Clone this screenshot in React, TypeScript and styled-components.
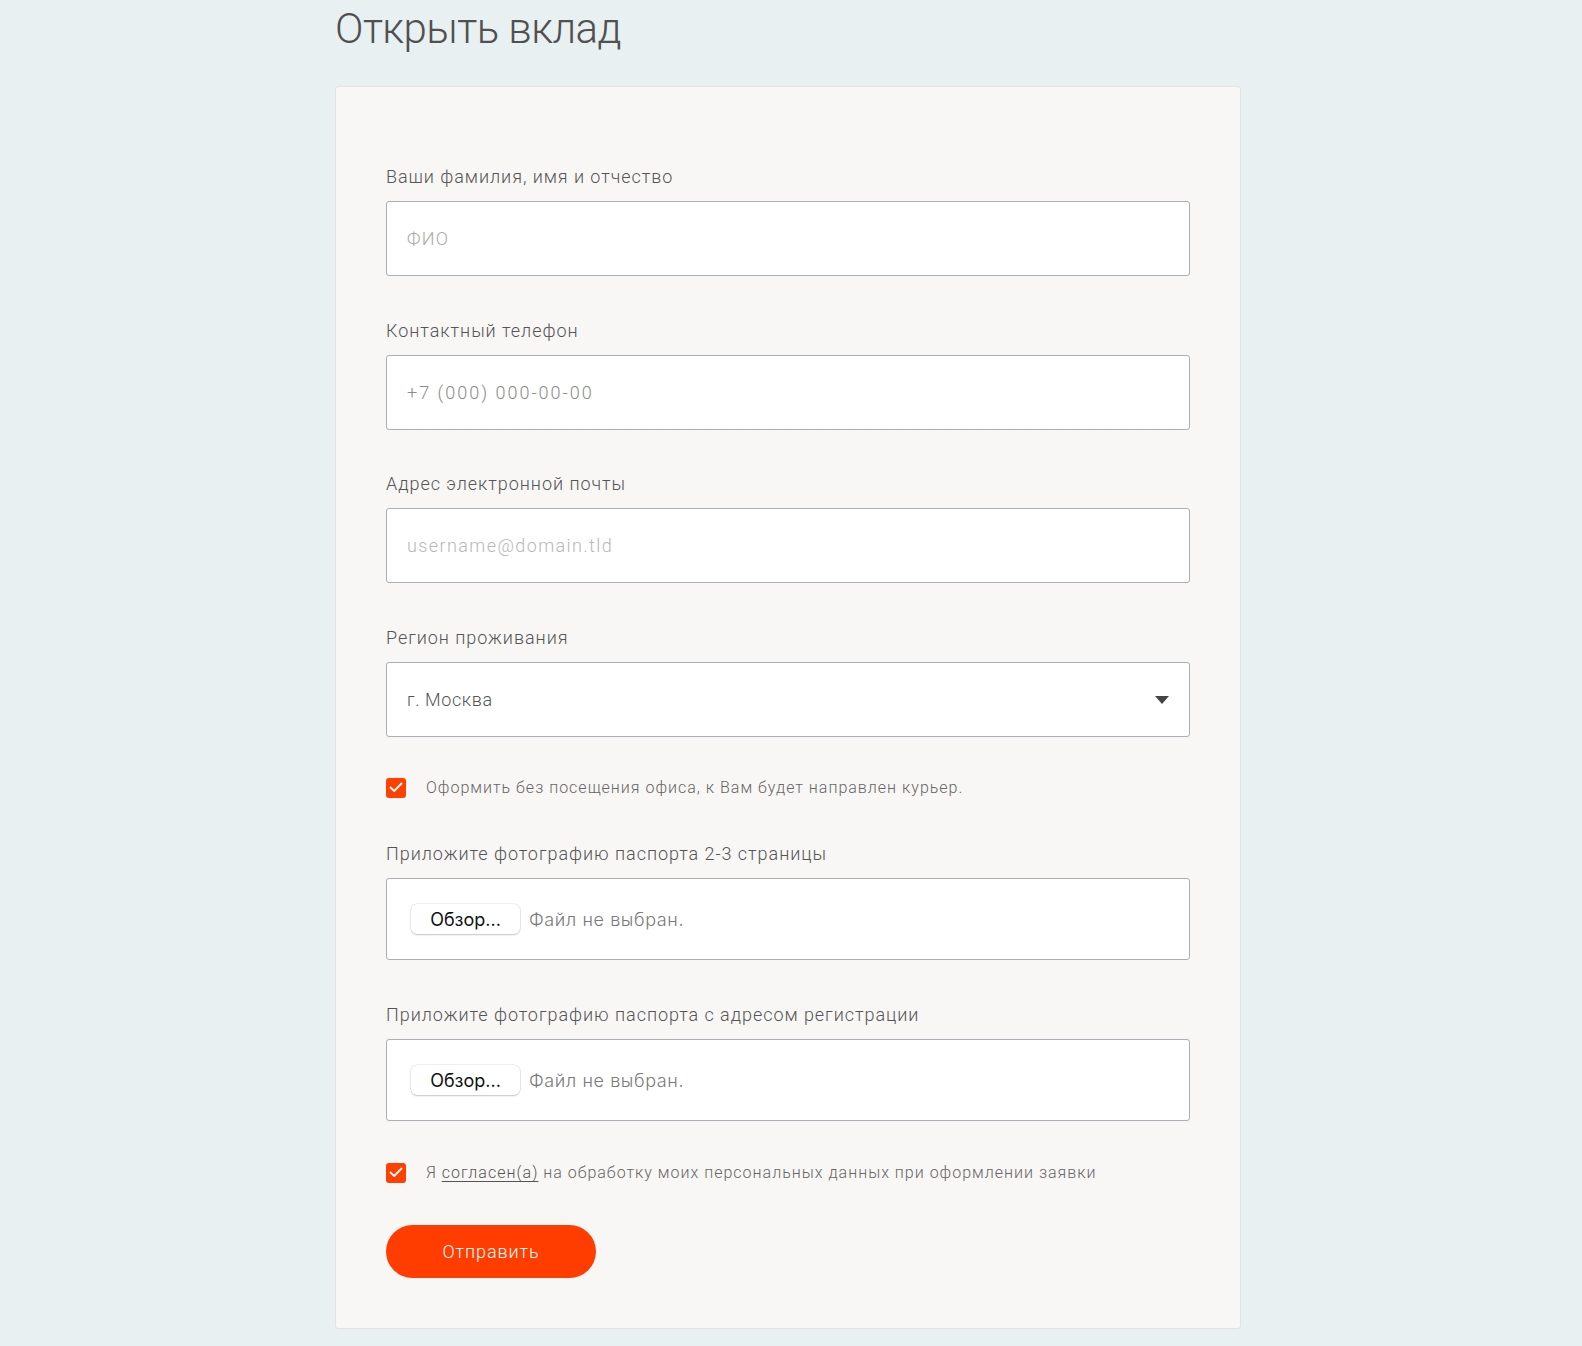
import React from "react";
import styled, { createGlobalStyle } from "styled-components";

const GlobalStyle = createGlobalStyle`
  html, body {
    margin: 0;
    padding: 0;
    background: #e8f0f1;
  }
  body {
    font-family: Roboto, "Noto Sans", sans-serif;
    -webkit-font-smoothing: antialiased;
  }
  * { box-sizing: border-box; }
`;

const Page = styled.div`
  width: 906px;
  margin-left: calc(50% - 456px);
  padding-top: 4px;
  padding-bottom: 17px;
`;

const Title = styled.h1`
  margin: 0 0 32px;
  font-family: Roboto, sans-serif;
  font-weight: 300;
  font-size: 42px;
  line-height: 50px;
  color: #505050;
  letter-spacing: -0.55px;
`;

const Card = styled.form`
  width: 906px;
  background: #f8f7f5;
  border: 1px solid #e1e3e3;
  border-radius: 3px;
  padding: 78px 50px 50px;
  display: flex;
  flex-direction: column;
`;

const Field = styled.div<{ $gap?: number }>`
  display: flex;
  flex-direction: column;
  gap: 12px;
  margin-bottom: ${(p) => p.$gap ?? 42.7}px;
`;

const Label = styled.label`
  font-family: Roboto, sans-serif;
  font-weight: 300;
  font-size: 18px;
  line-height: 24px;
  color: #555;
  letter-spacing: 0.95px;
`;

const Input = styled.input<{ $ph?: string; $ls?: number }>`
  width: 100%;
  height: 75px;
  border: 1px solid #a9afb3;
  border-radius: 3px;
  background: #fff;
  padding: 0 20px;
  font-family: Roboto, sans-serif;
  font-weight: 300;
  font-size: 18px;
  letter-spacing: ${(p) => p.$ls ?? 1.3}px;
  color: #555;
  outline: none;
  &::placeholder {
    color: ${(p) => p.$ph ?? "#aaa"};
  }
`;

const SelectBox = styled.div`
  position: relative;
  display: flex;
  align-items: center;
  justify-content: space-between;
  height: 75px;
  border: 1px solid #a9afb3;
  border-radius: 3px;
  background: #fff;
  padding: 0 20px;
  font-family: Roboto, sans-serif;
  font-weight: 300;
  font-size: 18px;
  letter-spacing: 0.6px;
  color: #555;
`;

const Caret = styled.span`
  width: 0;
  height: 0;
  border-left: 7px solid transparent;
  border-right: 7px solid transparent;
  border-top: 8px solid #444;
  margin-top: 1px;
`;

const CheckRow = styled.label<{ $gap: number }>`
  display: flex;
  align-items: center;
  gap: 20px;
  height: 24px;
  margin-bottom: ${(p) => p.$gap}px;
  font-family: Roboto, sans-serif;
  font-weight: 300;
  font-size: 16px;
  letter-spacing: 1px;
  color: #666;
`;

const Box = styled.span`
  flex: none;
  width: 20px;
  height: 20px;
  border-radius: 3px;
  background: #ff4000;
  display: flex;
  align-items: center;
  justify-content: center;
`;

const Link = styled.a`
  color: #555;
  text-decoration: underline;
  text-underline-offset: 3px;
  text-decoration-thickness: 1px;
`;

const FileBox = styled.div`
  display: flex;
  align-items: center;
  gap: 9px;
  height: 82px;
  border: 1px solid #a9afb3;
  border-radius: 3px;
  background: #fff;
  padding: 0 24px;
`;

const FileButton = styled.span`
  display: inline-flex;
  align-items: center;
  justify-content: center;
  width: 109px;
  height: 30px;
  border-radius: 6px;
  background: #fff;
  box-shadow: 0 0 0 0.5px rgba(0, 0, 0, 0.12), 0 1px 2px rgba(0, 0, 0, 0.18);
  font-family: Inter, "Liberation Sans", sans-serif;
  font-size: 18px;
  color: #111;
`;

const FileText = styled.span`
  font-family: Inter, "Liberation Sans", sans-serif;
  font-weight: 300;
  font-size: 18px;
  letter-spacing: 0.6px;
  color: #7a7a7a;
`;

const Submit = styled.button`
  width: 210px;
  height: 53px;
  border: none;
  border-radius: 27px;
  background: #ff3d00;
  color: #fff;
  font-family: Roboto, sans-serif;
  font-weight: 300;
  font-size: 18px;
  letter-spacing: 0.9px;
  cursor: pointer;
`;

const Check = () => (
  <svg width="14" height="11" viewBox="0 0 14 11" fill="none">
    <path d="M1.5 5.5L5.2 9L12.5 1.5" stroke="#fff" strokeWidth="1.8" strokeLinecap="round" strokeLinejoin="round" />
  </svg>
);

export default function App() {
  return (
    <>
      <GlobalStyle />
      <Page>
        <Title>Открыть вклад</Title>
        <Card onSubmit={(e) => e.preventDefault()}>
          <Field>
            <Label>Ваши фамилия, имя и отчество</Label>
            <Input placeholder="ФИО" $ph="#aaa" />
          </Field>
          <Field>
            <Label>Контактный телефон</Label>
            <Input placeholder="+7 (000) 000-00-00" $ph="#8c8c8c" $ls={2} />
          </Field>
          <Field>
            <Label>Адрес электронной почты</Label>
            <Input placeholder="username@domain.tld" $ph="#b8b8b8" $ls={1.4} />
          </Field>
          <Field $gap={38.7}>
            <Label>Регион проживания</Label>
            <SelectBox>
              <span>г. Москва</span>
              <Caret />
            </SelectBox>
          </Field>
          <CheckRow $gap={42.6}>
            <Box><Check /></Box>
            <span>Оформить без посещения офиса, к Вам будет направлен курьер.</span>
          </CheckRow>
          <Field $gap={43}>
            <Label>Приложите фотографию паспорта 2-3 страницы</Label>
            <FileBox>
              <FileButton>Обзор...</FileButton>
              <FileText>Файл не выбран.</FileText>
            </FileBox>
          </Field>
          <Field $gap={39.4}>
            <Label>Приложите фотографию паспорта с адресом регистрации</Label>
            <FileBox>
              <FileButton>Обзор...</FileButton>
              <FileText>Файл не выбран.</FileText>
            </FileBox>
          </Field>
          <CheckRow $gap={40.6}>
            <Box><Check /></Box>
            <span>
              Я <Link>согласен(а)</Link> на обработку моих персональных данных при оформлении заявки
            </span>
          </CheckRow>
          <div>
            <Submit type="submit">Отправить</Submit>
          </div>
        </Card>
      </Page>
    </>
  );
}
